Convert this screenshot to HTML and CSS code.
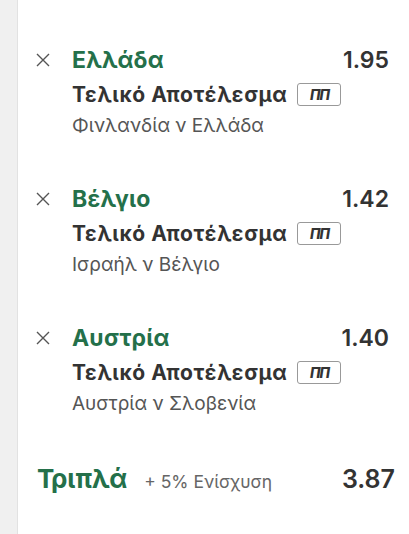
FILE: index.html
```html
<!DOCTYPE html>
<html lang="el">
<head>
    <meta charset="UTF-8">
    <meta name="viewport" content="width=device-width, initial-scale=1.0">
    <title>Δελτίο</title>
    <link rel="stylesheet" href="styles.css">
</head>
<body>
    <div class="rail"></div>

    <div class="slip">
        <div class="selection">
            <span class="remove">
                <svg width="14" height="14" viewBox="0 0 14 14"><path d="M1 1L13 13M13 1L1 13" stroke="#555" stroke-width="1.4" fill="none"/></svg>
            </span>
            <div class="sel-body">
                <div class="sel-head">
                    <span class="sel-name">Ελλάδα</span>
                    <span class="sel-odds">1.95</span>
                </div>
                <div class="sel-market">Τελικό Αποτέλεσμα <span class="badge">ΠΠ</span></div>
                <div class="sel-event">Φινλανδία ν Ελλάδα</div>
            </div>
        </div>

        <div class="selection">
            <span class="remove">
                <svg width="14" height="14" viewBox="0 0 14 14"><path d="M1 1L13 13M13 1L1 13" stroke="#555" stroke-width="1.4" fill="none"/></svg>
            </span>
            <div class="sel-body">
                <div class="sel-head">
                    <span class="sel-name">Βέλγιο</span>
                    <span class="sel-odds">1.42</span>
                </div>
                <div class="sel-market">Τελικό Αποτέλεσμα <span class="badge">ΠΠ</span></div>
                <div class="sel-event">Ισραήλ ν Βέλγιο</div>
            </div>
        </div>

        <div class="selection">
            <span class="remove">
                <svg width="14" height="14" viewBox="0 0 14 14"><path d="M1 1L13 13M13 1L1 13" stroke="#555" stroke-width="1.4" fill="none"/></svg>
            </span>
            <div class="sel-body">
                <div class="sel-head">
                    <span class="sel-name">Αυστρία</span>
                    <span class="sel-odds">1.40</span>
                </div>
                <div class="sel-market">Τελικό Αποτέλεσμα <span class="badge">ΠΠ</span></div>
                <div class="sel-event">Αυστρία ν Σλοβενία</div>
            </div>
        </div>

        <div class="total">
            <span class="total-name">Τριπλά</span>
            <span class="total-boost">+ 5% Ενίσχυση</span>
            <span class="total-odds">3.87</span>
        </div>
    </div>
</body>
</html>
```

FILE: styles.css
```css
* {
    margin: 0;
    padding: 0;
    box-sizing: border-box;
}

body {
    font-family: Inter, "Noto Sans", sans-serif;
    background: #fff;
    height: 100vh;
    display: flex;
    color: #333;
}

.rail {
    width: 18px;
    background: #f0f0f0;
    border-right: 1px solid #e2e2e2;
}

.slip {
    flex: 1;
    padding: 46px 20px 0 18px;
}

.selection {
    display: flex;
    margin-bottom: 48px;
}

.remove {
    width: 36px;
    height: 28px;
    display: flex;
    align-items: center;
}

.sel-body {
    flex: 1;
}

.sel-head {
    display: flex;
    justify-content: space-between;
    align-items: center;
    height: 28px;
}

.sel-name {
    color: #24704a;
    font-size: 23px;
    font-weight: 700;
    letter-spacing: 0.2px;
}

.sel-odds {
    font-size: 23px;
    font-weight: 600;
    color: #333;
}

.sel-market {
    display: flex;
    align-items: center;
    margin-top: 8px;
    font-size: 21px;
    font-weight: 700;
    letter-spacing: 0.6px;
    color: #333;
    height: 24px;
}

.badge {
    margin-left: 10px;
    width: 44px;
    height: 23px;
    border: 1px solid #999;
    border-radius: 3px;
    font-size: 14px;
    font-weight: 800;
    font-style: italic;
    display: flex;
    align-items: center;
    justify-content: center;
    letter-spacing: -1px;
}

.sel-event {
    margin-top: 9px;
    font-size: 19px;
    line-height: 22px;
    color: #555;
}

.total {
    display: flex;
    align-items: baseline;
    margin-left: 1px;
    margin-right: -6px;
}

.total-name {
    color: #24704a;
    font-size: 26px;
    font-weight: 700;
}

.total-boost {
    margin-left: 17px;
    font-size: 17.5px;
    color: #666;
}

.total-odds {
    margin-left: auto;
    font-size: 25px;
    font-weight: 600;
}
```
